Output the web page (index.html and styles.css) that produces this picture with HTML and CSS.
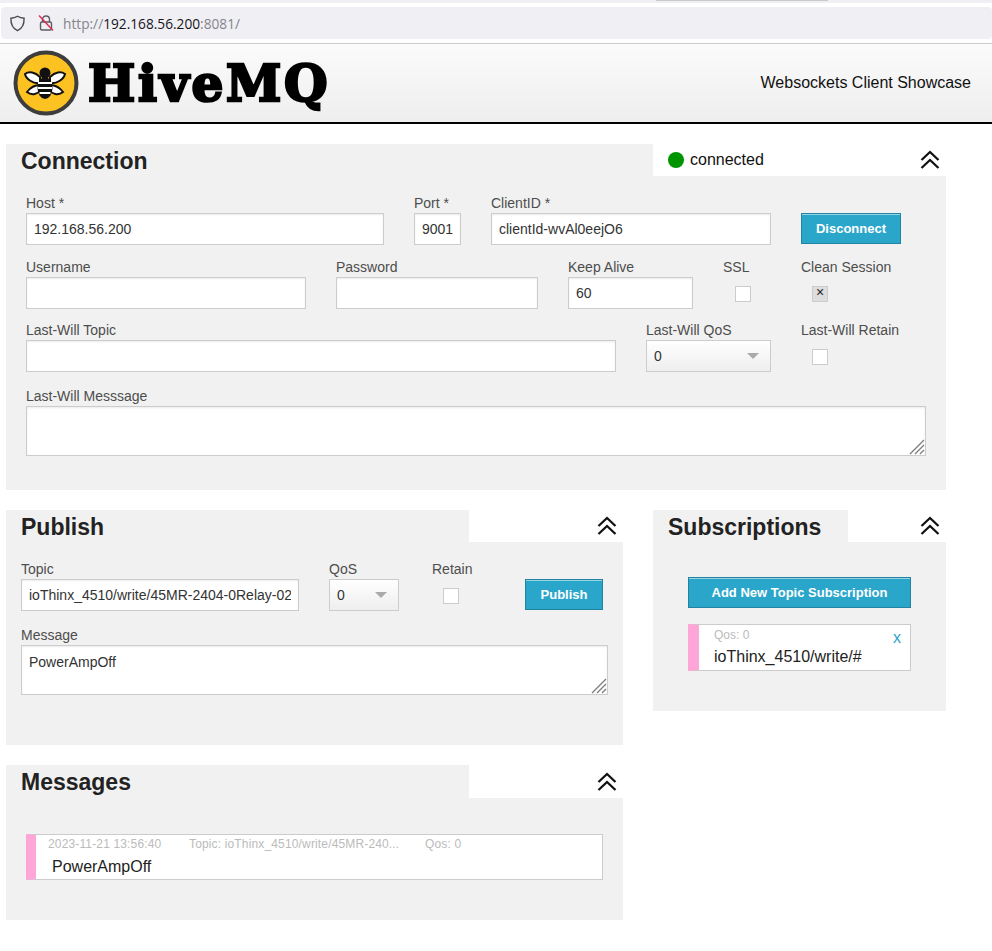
FILE: index.html
```html
<!DOCTYPE html>
<html lang="en">
<head>
  <meta charset="UTF-8">
  <title>HiveMQ Websockets Client</title>
  <link rel="stylesheet" href="styles.css">
</head>
<body>
  <!-- Browser chrome -->
  <div class="browser-bar">
    <div class="tab-shadow"></div>
    <div class="url-bar">
      <svg class="url-icon" width="17" height="17" viewBox="0 0 16 16" fill="none" stroke="#4a4a4f" stroke-width="1.3">
        <path d="M8 1.2 C10 2.4 12 2.9 14.2 3 C14.4 8.6 12.4 12.6 8 14.8 C3.6 12.6 1.6 8.6 1.8 3 C4 2.9 6 2.4 8 1.2 Z"/>
      </svg>
      <svg class="url-icon lock" width="16" height="18" viewBox="0 0 16 18" fill="none">
        <path d="M4.5 8 V5.5 C4.5 3.3 6 2 8 2 C10 2 11.5 3.3 11.5 5.5 V8" stroke="#5b5b66" stroke-width="1.4"/>
        <rect x="2.5" y="8" width="11" height="8" rx="1.5" stroke="#5b5b66" stroke-width="1.4"/>
        <path d="M1 1.5 L15 16.5" stroke="#e22850" stroke-width="1.4"/>
      </svg>
      <span class="url-text"><span class="url-dim">http://</span>192.168.56.200<span class="url-dim">:8081/</span></span>
    </div>
  </div>

  <header class="site-header">
    <div class="logo">
      <svg width="66" height="66" viewBox="0 0 66 66">
        <circle cx="33" cy="33" r="30.5" fill="#fcc221" stroke="#3d3d3d" stroke-width="4"/>
        <path d="M27 27 C22 22 16 21 12 24 C13 29 20 34 27 33 Z" fill="#fff" stroke="#111" stroke-width="2"/>
        <path d="M37 27 C42 22 48 21 52 24 C51 29 44 34 37 33 Z" fill="#fff" stroke="#111" stroke-width="2"/>
        <path d="M27 35 C22 35 17 38 14 42 C19 46 25 44 28 40 Z" fill="#fff" stroke="#111" stroke-width="2"/>
        <path d="M37 35 C42 35 47 38 50 42 C45 46 39 44 36 40 Z" fill="#fff" stroke="#111" stroke-width="2"/>
        <circle cx="32" cy="23" r="5.5" fill="#111"/>
        <ellipse cx="32" cy="38" rx="7.5" ry="11" fill="#111"/>
        <path d="M25 33 H39 M25 38 H39 M26.5 43 H37.5" stroke="#fff" stroke-width="1.8"/>
      </svg>
      <span class="logo-text">HiveMQ</span>
    </div>
    <div class="tagline">Websockets Client Showcase</div>
  </header>

  <main class="page">
    <section class="panel">
      <div class="panel-head">
        <h2 class="panel-title title-connection">Connection</h2>
        <div class="panel-side">
          <span class="status"><span class="status-dot"></span>connected</span>
          <svg class="chevrons" width="20" height="20" viewBox="0 0 20 20" fill="none" stroke="#111" stroke-width="2.3"><path d="M1.5 10 L10 2 L18.5 10 M1.5 18 L10 10 L18.5 18"/></svg>
        </div>
      </div>
      <div class="panel-body connection-body">
        <div class="form-row">
          <div class="field w-358"><label>Host *</label><input type="text" value="192.168.56.200"></div>
          <div class="field w-47"><label>Port *</label><input type="text" value="9001"></div>
          <div class="field w-280"><label>ClientID *</label><input type="text" value="clientId-wvAl0eejO6"></div>
          <div class="field w-100"><label>&nbsp;</label><button class="btn">Disconnect</button></div>
        </div>
        <div class="form-row row-tight">
          <div class="field w-280"><label>Username</label><input type="text"></div>
          <div class="field w-202"><label>Password</label><input type="text"></div>
          <div class="field w-125"><label>Keep Alive</label><input type="text" value="60"></div>
          <div class="field w-48"><label>SSL</label><span class="check check-ssl"></span></div>
          <div class="field w-100"><label>Clean Session</label><span class="check check-on">×</span></div>
        </div>
        <div class="form-row row-loose">
          <div class="field w-590"><label>Last-Will Topic</label><input type="text"></div>
          <div class="field w-125"><label>Last-Will QoS</label><div class="select">0<span class="caret"></span></div></div>
          <div class="field w-100"><label>Last-Will Retain</label><span class="check check-retain"></span></div>
        </div>
        <div class="field">
          <label>Last-Will Messsage</label>
          <div class="textarea-wrap w-900">
            <textarea></textarea>
            <svg class="grip" width="16" height="16" viewBox="0 0 16 16" fill="none" stroke="#808080" stroke-width="1.4"><path d="M15 1 L1 15 M15 6 L6 15 M15 11 L11 15"/></svg>
          </div>
        </div>
      </div>
    </section>

    <div class="columns">
      <div class="column-left">
        <section class="panel">
          <div class="panel-head">
            <h2 class="panel-title title-wide">Publish</h2>
            <div class="panel-side">
              <svg class="chevrons" width="20" height="20" viewBox="0 0 20 20" fill="none" stroke="#111" stroke-width="2.3"><path d="M1.5 10 L10 2 L18.5 10 M1.5 18 L10 10 L18.5 18"/></svg>
            </div>
          </div>
          <div class="panel-body publish-body">
            <div class="form-row row-loose">
              <div class="field w-278"><label>Topic</label><input type="text" value="ioThinx_4510/write/45MR-2404-0Relay-02"></div>
              <div class="field w-70"><label>QoS</label><div class="select">0<span class="caret"></span></div></div>
              <div class="field field-retain"><label>Retain</label><span class="check check-pub"></span></div>
              <div class="field w-78"><label>&nbsp;</label><button class="btn">Publish</button></div>
            </div>
            <div class="field">
              <label>Message</label>
              <div class="textarea-wrap w-587">
                <textarea>PowerAmpOff</textarea>
                <svg class="grip" width="16" height="16" viewBox="0 0 16 16" fill="none" stroke="#808080" stroke-width="1.4"><path d="M15 1 L1 15 M15 6 L6 15 M15 11 L11 15"/></svg>
              </div>
            </div>
          </div>
        </section>

        <section class="panel">
          <div class="panel-head head-tall">
            <h2 class="panel-title title-wide">Messages</h2>
            <div class="panel-side">
              <svg class="chevrons" width="20" height="20" viewBox="0 0 20 20" fill="none" stroke="#111" stroke-width="2.3"><path d="M1.5 10 L10 2 L18.5 10 M1.5 18 L10 10 L18.5 18"/></svg>
            </div>
          </div>
          <div class="panel-body messages-body">
            <div class="item">
              <div class="item-meta">
                <span class="meta-date">2023-11-21 13:56:40</span>
                <span class="meta-topic">Topic: ioThinx_4510/write/45MR-240...</span>
                <span>Qos: 0</span>
              </div>
              <div class="item-payload">PowerAmpOff</div>
            </div>
          </div>
        </section>
      </div>

      <section class="panel column-right">
        <div class="panel-head">
          <h2 class="panel-title title-subs">Subscriptions</h2>
          <div class="panel-side">
            <svg class="chevrons" width="20" height="20" viewBox="0 0 20 20" fill="none" stroke="#111" stroke-width="2.3"><path d="M1.5 10 L10 2 L18.5 10 M1.5 18 L10 10 L18.5 18"/></svg>
          </div>
        </div>
        <div class="panel-body subs-body">
          <button class="btn btn-wide">Add New Topic Subscription</button>
          <div class="item sub-item">
            <div class="sub-qos">Qos: 0</div>
            <div class="sub-topic">ioThinx_4510/write/#</div>
            <span class="sub-close">x</span>
          </div>
        </div>
      </section>
    </div>
  </main>
</body>
</html>
```

FILE: styles.css
```css
* {
  box-sizing: border-box;
}

body {
  margin: 0;
  background: #fff;
  color: #222;
  font-family: "Liberation Sans", Arial, sans-serif;
  font-size: 14px;
}

/* Browser chrome */
.browser-bar {
  position: relative;
  height: 44px;
  padding-top: 7px;
  border-top: 3px solid #f0f0f4;
  border-bottom: 1px solid #ccc;
  background: #fff;
}

.tab-shadow {
  position: absolute;
  top: -3px;
  left: 656px;
  width: 172px;
  height: 1px;
  background: #c9c9cc;
}

.url-bar {
  display: flex;
  align-items: center;
  height: 32px;
  margin-top: -3px;
  margin-left: 1px;
  padding-left: 8px;
  border-radius: 4px;
  background: #f0f0f4;
}

.url-icon.lock {
  margin-left: 12px;
}

.url-text {
  margin-left: 9px;
  font-family: "Open Sans", sans-serif;
  font-size: 13.7px;
  color: #15141a;
}

.url-dim {
  color: #85848c;
}

/* Site header */
.site-header {
  display: flex;
  align-items: center;
  justify-content: space-between;
  height: 80px;
  padding: 0 21px 0 13px;
  border-bottom: 2px solid #000;
  background: linear-gradient(#fbfbfb, #eee);
}

.logo {
  display: flex;
  align-items: center;
  gap: 9px;
}

.logo-text {
  font-family: "DejaVu Serif", serif;
  font-size: 50px;
  font-weight: bold;
  letter-spacing: 2.7px;
  color: #000;
  -webkit-text-stroke: 2.6px #000;
}

.tagline {
  font-size: 16px;
  color: #111;
}

/* Panels */
.page {
  width: 940px;
  margin: 20px 0 0 6px;
}

.panel-head {
  display: flex;
  height: 32px;
}

.head-tall {
  height: 33px;
}

.panel-title {
  margin: 0;
  height: 100%;
  padding-left: 15px;
  background: #f1f1f1;
  font-size: 23px;
  line-height: 34px;
  color: #222;
}

.title-connection {
  width: 647px;
}

.title-wide {
  width: 463px;
}

.title-subs {
  width: 195px;
}

.panel-side {
  flex: 1;
  display: flex;
  align-items: center;
  justify-content: space-between;
  padding: 0 6px 0 15px;
}

.chevrons {
  margin-left: auto;
}

.status {
  display: flex;
  align-items: center;
  gap: 6px;
  font-size: 16px;
  color: #111;
}

.status-dot {
  width: 16px;
  height: 16px;
  border-radius: 50%;
  background: #009500;
}

.panel-body {
  background: #f1f1f1;
}

.connection-body {
  height: 314px;
  padding: 18px 20px 0;
}

.publish-body {
  height: 203px;
  padding: 18px 15px 0;
}

.messages-body {
  height: 122px;
  padding: 36px 20px 0;
}

.subs-body {
  height: 169px;
  padding: 35px 35px 0;
}

.columns {
  display: flex;
  gap: 30px;
  margin-top: 20px;
}

.column-left {
  display: flex;
  flex-direction: column;
  gap: 20px;
  width: 617px;
}

.column-right {
  width: 293px;
}

/* Form */
.form-row {
  display: flex;
  gap: 30px;
  margin-bottom: 13px;
}

.row-tight {
  margin-bottom: 12px;
}

.row-loose {
  margin-bottom: 15px;
}

.field label {
  display: block;
  height: 19px;
  color: #4d4d4d;
  font-size: 14px;
  line-height: 19px;
}

.field-retain {
  width: 63px;
  margin-left: 3px;
}

input[type="text"],
textarea {
  display: block;
  width: 100%;
  height: 32px;
  padding: 0 7px;
  border: 1px solid #ccc;
  box-shadow: inset 0 1px 2px rgba(0, 0, 0, 0.08);
  background: #fff;
  color: #333;
  font-family: "Liberation Sans", Arial, sans-serif;
  font-size: 14px;
  outline: none;
}

textarea {
  height: 50px;
  padding: 8px 7px;
  overflow: hidden;
  resize: none;
}

.textarea-wrap {
  position: relative;
}

.grip {
  position: absolute;
  right: 1px;
  bottom: 1px;
}

.w-47 { width: 47px; }
.w-48 { width: 48px; }
.w-70 { width: 70px; }
.w-78 { width: 78px; }
.w-100 { width: 100px; }
.w-125 { width: 125px; }
.w-202 { width: 202px; }
.w-278 { width: 278px; }
.w-280 { width: 280px; }
.w-358 { width: 358px; }
.w-587 { width: 587px; }
.w-590 { width: 590px; }
.w-900 { width: 900px; }

.select {
  display: flex;
  align-items: center;
  justify-content: space-between;
  height: 32px;
  padding: 0 11px 0 7px;
  border: 1px solid #ccc;
  background: linear-gradient(#fff, #eee);
  color: #333;
  font-size: 14px;
}

.caret {
  border-left: 6px solid transparent;
  border-right: 6px solid transparent;
  border-top: 6px solid #aaa;
}

.check {
  display: block;
  width: 16px;
  height: 16px;
  margin-top: 9px;
  border: 1px solid #ccc;
  background: #fff;
}

.check-ssl {
  margin-left: 12px;
}

.check-on,
.check-retain,
.check-pub {
  margin-left: 11px;
}

.check-on {
  background: #ddd;
  color: #222;
  font-size: 14px;
  line-height: 11px;
  text-align: center;
}

.btn {
  display: block;
  width: 100%;
  height: 31px;
  padding: 0;
  border: 1px solid #2284a1;
  box-shadow: inset 0 1px 0 rgba(255, 255, 255, 0.5);
  background: #2ba6cb;
  color: #fff;
  font-family: "Liberation Sans", Arial, sans-serif;
  font-size: 13px;
  font-weight: bold;
}

.btn-wide {
  width: 223px;
}

/* Message and subscription items */
.item {
  position: relative;
  height: 46px;
  padding-left: 12px;
  border: 1px solid #ccc;
  border-left: 10px solid #ffa6d9;
  background: #fff;
}

.item-meta {
  display: flex;
  height: 21px;
  padding-top: 2px;
  color: #bbb;
  font-size: 12px;
  letter-spacing: 0.15px;
}

.meta-date {
  width: 141px;
}

.meta-topic {
  width: 236px;
}

.item-payload {
  margin-left: 4px;
  color: #222;
  font-size: 16px;
  line-height: 22px;
}

.sub-item {
  width: 223px;
  height: 47px;
  margin-top: 16px;
  padding-left: 15px;
  border-left-width: 11px;
}

.sub-qos {
  height: 21px;
  padding-top: 3px;
  color: #bbb;
  font-size: 12px;
}

.sub-topic {
  color: #222;
  font-size: 16px;
  line-height: 22px;
}

.sub-close {
  position: absolute;
  top: 4px;
  right: 9px;
  color: #2ba6cb;
  font-size: 16px;
}
```
